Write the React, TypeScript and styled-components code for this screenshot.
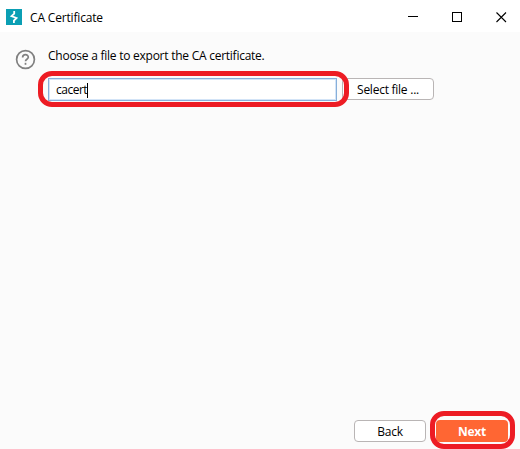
import React from "react";
import styled, { createGlobalStyle } from "styled-components";

const GlobalStyle = createGlobalStyle`
  * { box-sizing: border-box; }
  body { margin: 0; overflow: hidden; background: #fbfbfb; }
`;

const Dialog = styled.div`
  width: 520px;
  height: 449px;
  display: flex;
  flex-direction: column;
  background: #fbfbfb;
  color: #000;
  font: 12px/16px "Open Sans", "Noto Sans", sans-serif;
  letter-spacing: -0.25px;
  white-space: nowrap;
`;

const TitleBar = styled.header`
  height: 32px;
  flex: none;
  display: flex;
  align-items: center;
  padding: 2px 13px 0 6px;
  background: #fff;
`;

const Title = styled.span`
  flex: 1;
  margin-left: 8px;
  padding-top: 2px;
  letter-spacing: -0.17px;
`;

const WindowControls = styled.div`
  display: flex;
  gap: 33px;

  svg { display: block; }
`;

const Content = styled.main`
  flex: 1;
  display: flex;
  align-items: flex-start;
  gap: 12px;
  padding: 16px 15px 0;
`;

const HelpIcon = styled.svg`
  display: block;
  margin-top: 1px;
`;

const Form = styled.div`
  display: flex;
  flex-direction: column;
  gap: 14px;
`;

const FileRow = styled.div`
  display: flex;
  gap: 5px;
`;

const Highlighted = styled.div`
  position: relative;
  display: flex;
`;

const Highlight = styled.div<{ $inset: string }>`
  position: absolute;
  inset: ${(p) => p.$inset};
  border: 5px solid #ed1c24;
  border-radius: 14px;
  z-index: 1;
  pointer-events: none;
`;

const FileInput = styled.div`
  width: 289px;
  height: 23px;
  display: flex;
  align-items: center;
  padding: 1px 0 0 7px;
  border: 1px solid #87afda;
  box-shadow: inset 0 0 0 1px #d3e4f7;
  background: #fff;
  letter-spacing: -0.5px;
`;

const Caret = styled.i`
  width: 1px;
  height: 15px;
  background: #000;
`;

const Button = styled.button<{ $primary?: boolean; $width: number }>`
  width: ${(p) => p.$width}px;
  height: 22px;
  padding: 2px 0 0;
  border: ${(p) => (p.$primary ? "0" : "1px solid #b9b5b5")};
  border-radius: 4px;
  background: ${(p) => (p.$primary ? "#ff6633" : "#fff")};
  color: ${(p) => (p.$primary ? "#fff" : "#000")};
  font: inherit;
  font-weight: ${(p) => (p.$primary ? 700 : 400)};
  letter-spacing: inherit;
`;

const Footer = styled.footer`
  display: flex;
  justify-content: flex-end;
  gap: 10px;
  padding: 0 12px 7px 0;
`;

export default function App() {
  return (
    <Dialog>
      <GlobalStyle />
      <TitleBar>
        <svg width="16" height="16" viewBox="0 0 16 16">
          <rect width="16" height="16" fill="#0b9fb4" />
          <path d="M8.2 2v2.6L5.5 7.2l5 1.8-2.6 2.6V14" fill="none" stroke="#fff" strokeWidth="1.8" />
        </svg>
        <Title>CA Certificate</Title>
        <WindowControls>
          <svg width="11" height="11"><path d="M0 4.5h10" stroke="#000" /></svg>
          <svg width="11" height="11"><rect x=".5" y=".5" width="9" height="9" fill="none" stroke="#000" /></svg>
          <svg width="11" height="11"><path d="m.5.5 9.5 9.5M10 .5.5 10" stroke="#000" strokeWidth="1.1" /></svg>
        </WindowControls>
      </TitleBar>
      <Content>
        <HelpIcon width="21" height="21" viewBox="0 0 21 21" fill="none" stroke="#808080" strokeWidth="1.7">
          <circle cx="10.5" cy="10.5" r="8.9" />
          <path d="M7.6 8.5c.1-3.9 5.8-3.7 5.7-.2 0 2-2.8 1.8-2.8 3.9" />
          <path d="M10.5 13.8v2" />
        </HelpIcon>
        <Form>
          <div>Choose a file to export the CA certificate.</div>
          <FileRow>
            <Highlighted>
              <FileInput>cacert<Caret /></FileInput>
              <Highlight $inset="-7px -12px -6px -10px" />
            </Highlighted>
            <Button $width={92}>Select file ...</Button>
          </FileRow>
        </Form>
      </Content>
      <Footer>
        <Button $width={72}>Back</Button>
        <Highlighted>
          <Button $primary $width={72}>Next</Button>
          <Highlight $inset="-9px -7px -7px -6px" />
        </Highlighted>
      </Footer>
    </Dialog>
  );
}
